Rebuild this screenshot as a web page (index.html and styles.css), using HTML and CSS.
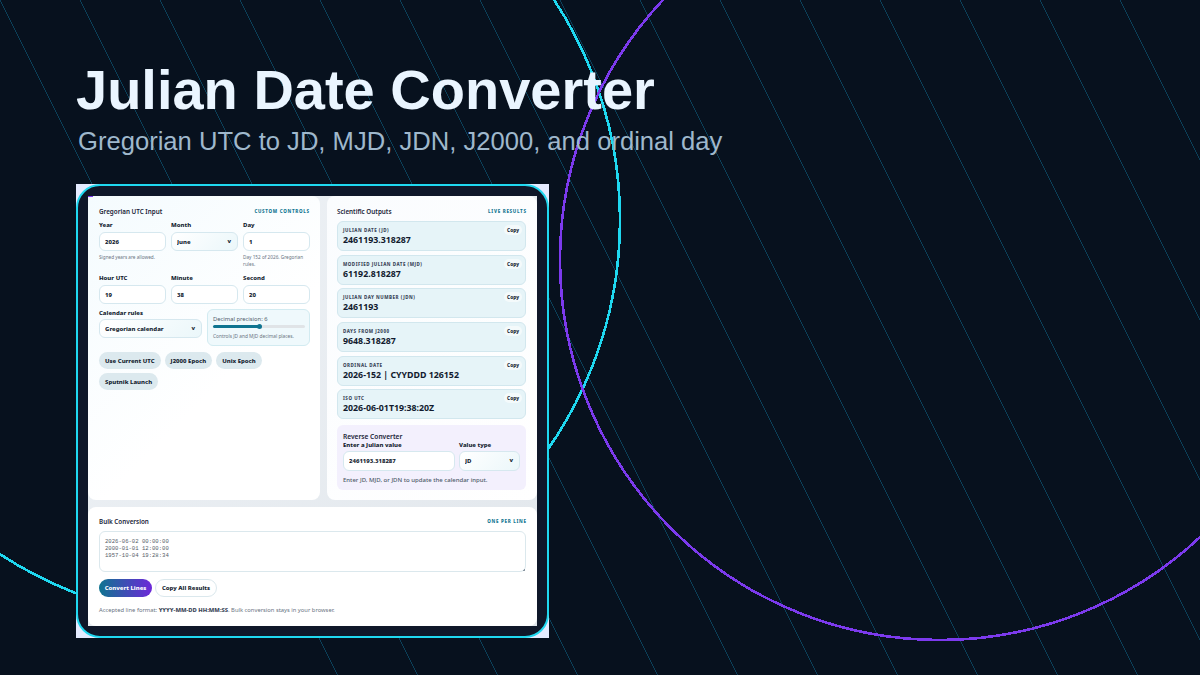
FILE: index.html
```html
<!doctype html>
<html lang="en">
  <head>
    <meta charset="UTF-8" />
    <meta name="viewport" content="width=device-width, initial-scale=1.0" />
    <title>Julian Date Converter</title>
    <link rel="stylesheet" href="styles.css">
  </head>
  <body>
    <svg class="backdrop" width="1200" height="675" viewBox="0 0 1200 675" shape-rendering="crispEdges">
      <path
        d="M0 0l337.5 675M80 0l337.5 675M160 0l337.5 675M240 0l337.5 675M320 0l337.5 675M400 0l337.5 675M480 0l337.5 675M560 0l337.5 675M640 0l337.5 675M720 0l337.5 675M800 0l337.5 675M880 0l337.5 675M960 0l337.5 675M1040 0l337.5 675M1120 0l337.5 675"
        fill="none"
        stroke="#0b3f58"
        stroke-width="1"
      />
      <circle cx="220" cy="220" r="400" fill="none" stroke="#1fd8f0" stroke-width="2.6" />
      <circle cx="940" cy="260" r="380" fill="none" stroke="#7c3aed" stroke-width="2.6" />
    </svg>

    <h1 class="headline">Julian Date Converter</h1>
    <p class="subhead">Gregorian UTC to JD, MJD, JDN, J2000, and ordinal day</p>

    <div class="frame">
      <div class="frame-inner">
        <div class="shot">
          <div class="top-row">
            <section class="card input-card">
              <div class="card-head">
                <h2>Gregorian UTC Input</h2>
                <span class="tag">Custom Controls</span>
              </div>

              <div class="field-grid">
                <div class="field">
                  <label>Year</label>
                  <input value="2026" />
                  <p class="hint">Signed years are allowed.</p>
                </div>
                <div class="field">
                  <label>Month</label>
                  <div class="select-wrap">
                    <select><option>June</option></select>
                  </div>
                </div>
                <div class="field">
                  <label>Day</label>
                  <input value="1" />
                  <p class="hint">Day 152 of 2026. Gregorian rules.</p>
                </div>
                <div class="field">
                  <label>Hour UTC</label>
                  <input value="19" />
                </div>
                <div class="field">
                  <label>Minute</label>
                  <input value="38" />
                </div>
                <div class="field">
                  <label>Second</label>
                  <input value="20" />
                </div>
              </div>

              <div class="rules-row">
                <div class="field">
                  <label>Calendar rules</label>
                  <div class="select-wrap">
                    <select><option>Gregorian calendar</option></select>
                  </div>
                </div>
                <div class="precision">
                  <span class="precision-label">Decimal precision: 6</span>
                  <input class="slider" type="range" min="0" max="12" value="6" />
                  <span class="precision-note">Controls JD and MJD decimal places.</span>
                </div>
              </div>

              <div class="chips">
                <button class="chip">Use Current UTC</button>
                <button class="chip">J2000 Epoch</button>
                <button class="chip">Unix Epoch</button>
                <button class="chip">Sputnik Launch</button>
              </div>
            </section>

            <section class="card output-card">
              <div class="card-head">
                <h2>Scientific Outputs</h2>
                <span class="tag">Live Results</span>
              </div>

              <div class="output">
                <span class="output-label">Julian Date (JD)</span>
                <strong class="output-value">2461193.318287</strong>
                <button class="copy">Copy</button>
              </div>
              <div class="output">
                <span class="output-label">Modified Julian Date (MJD)</span>
                <strong class="output-value">61192.818287</strong>
                <button class="copy">Copy</button>
              </div>
              <div class="output">
                <span class="output-label">Julian Day Number (JDN)</span>
                <strong class="output-value">2461193</strong>
                <button class="copy">Copy</button>
              </div>
              <div class="output">
                <span class="output-label">Days from J2000</span>
                <strong class="output-value">9648.318287</strong>
                <button class="copy">Copy</button>
              </div>
              <div class="output">
                <span class="output-label">Ordinal Date</span>
                <strong class="output-value">2026-152 | CYYDDD 126152</strong>
                <button class="copy">Copy</button>
              </div>
              <div class="output">
                <span class="output-label">ISO UTC</span>
                <strong class="output-value">2026-06-01T19:38:20Z</strong>
                <button class="copy">Copy</button>
              </div>

              <div class="reverse">
                <h3>Reverse Converter</h3>
                <div class="reverse-row">
                  <div class="field">
                    <label>Enter a Julian value</label>
                    <input value="2461193.318287" />
                  </div>
                  <div class="field">
                    <label>Value type</label>
                    <div class="select-wrap">
                      <select><option>JD</option></select>
                    </div>
                  </div>
                </div>
                <p class="reverse-note">Enter JD, MJD, or JDN to update the calendar input.</p>
              </div>
            </section>
          </div>

          <section class="card bulk-card">
            <div class="card-head">
              <h2>Bulk Conversion</h2>
              <span class="tag">One per line</span>
            </div>
            <div class="bulk-box">
              <textarea class="bulk-text" spellcheck="false">2026-06-02 00:00:00
2000-01-01 12:00:00
1957-10-04 19:28:34</textarea>
            </div>
            <div class="bulk-actions">
              <button class="btn-primary">Convert Lines</button>
              <button class="btn-ghost">Copy All Results</button>
            </div>
            <p class="bulk-note">Accepted line format: <strong>YYYY-MM-DD HH:MM:SS</strong>. Bulk conversion stays in your browser.</p>
          </section>
        </div>
      </div>
    </div>
  </body>
</html>
```

FILE: styles.css
```css
* {
  box-sizing: border-box;
}

html,
body {
  height: 100%;
}

body {
  margin: 0;
  padding: 59px 0 0 76px;
  overflow: hidden;
  background: #07111e;
  font-family: "Noto Sans", "Open Sans", sans-serif;
  color: #111a2e;
}

.backdrop {
  position: absolute;
  left: 0;
  top: 0;
}

.headline {
  position: relative;
  margin: 0;
  font-family: "Liberation Sans", Arial, sans-serif;
  font-size: 56px;
  line-height: 62px;
  font-weight: 700;
  color: #eaf5ff;
}

.subhead {
  position: relative;
  margin: 2px 0 0 2px;
  font-family: "Liberation Sans", Arial, sans-serif;
  font-size: 25.6px;
  line-height: 36px;
  color: #9fb8cc;
}

.frame {
  position: relative;
  width: 473px;
  height: 454px;
  margin-top: 25px;
  background: #e4ebff;
}

.frame-inner {
  height: 100%;
  padding: 10px;
  background: #0f1729;
  border: 2px solid #1fd8f0;
  border-radius: 24px;
}

.shot {
  position: relative;
  display: flex;
  flex-direction: column;
  gap: 7px;
  height: 100%;
  background: linear-gradient(135deg, #eef2f6, #e2e7ec);
}

.shot::before {
  content: "";
  position: absolute;
  left: 0;
  top: 0;
  width: 5px;
  height: 1px;
  background: #7c3aed;
}

.top-row {
  display: flex;
  gap: 7px;
  height: 304px;
}

.card {
  background: #fff;
  border-radius: 8px;
  padding: 11px;
}

.input-card {
  width: 232px;
  background: linear-gradient(135deg, #f4fbfe, #ffffff 60%);
}

.output-card {
  width: 210px;
  padding: 11px 11px 11px 10px;
  background: linear-gradient(135deg, #fafcfe, #ffffff);
}

.bulk-card {
  flex: 1;
}

.card-head {
  display: flex;
  justify-content: space-between;
  align-items: center;
  height: 10px;
  margin-top: -1px;
}

.card-head h2 {
  margin: 0;
  font-size: 6.3px;
  font-weight: 600;
  color: #1a2438;
}

.bulk-card .card-head {
  margin-top: -2px;
}

.tag {
  margin-right: -0.7px;
  font-size: 4.5px;
  font-weight: 800;
  letter-spacing: 0.7px;
  text-transform: uppercase;
  color: #0f7490;
}

.field-grid {
  display: grid;
  grid-template-columns: repeat(3, 67px);
  column-gap: 5px;
  margin-top: 5px;
}

.field label {
  display: block;
  height: 11px;
  font-size: 6px;
  line-height: 9px;
  font-weight: 800;
  color: #141d30;
}

.field input,
.field select {
  display: block;
  width: 100%;
  height: 19px;
  padding: 0 5px;
  border: 1px solid #d6e8ef;
  border-radius: 6px;
  outline: none;
  font-family: inherit;
  font-size: 6px;
  font-weight: 800;
  color: #141d30;
  background: #fff;
}

.field select {
  appearance: none;
  background: linear-gradient(135deg, #ffffff, #ebf7fa);
}

.select-wrap {
  position: relative;
}

.select-wrap::after {
  content: "v";
  position: absolute;
  right: 7px;
  top: 5px;
  font-size: 6px;
  line-height: 9px;
  font-weight: 800;
  color: #141d30;
}

.hint {
  margin: 3px 0 0;
  min-height: 14px;
  font-size: 4.7px;
  line-height: 7.4px;
  color: #69737f;
}

.field-grid .field:nth-child(n + 4) .hint {
  display: none;
}

.field-grid .field:nth-child(-n + 3) {
  height: 53px;
}

.rules-row {
  display: grid;
  grid-template-columns: 103px 103px;
  column-gap: 5px;
  margin-top: 5px;
}

.rules-row label {
  height: 10px;
}

.precision {
  display: flex;
  flex-direction: column;
  height: 37px;
  padding: 5px 5px 0;
  background: #eff9fc;
  border: 1px solid #d2ebf1;
  border-radius: 6px;
}

.precision-label {
  font-size: 5.8px;
  line-height: 8px;
  color: #4f5b6a;
}

.slider {
  appearance: none;
  display: block;
  width: 92px;
  height: 6px;
  margin: 0 0 3px;
  background: transparent;
}

.slider::-webkit-slider-runnable-track {
  height: 3px;
  border-radius: 2px;
  background: linear-gradient(90deg, #0f7490 50%, #e0e4e7 50%);
}

.slider::-webkit-slider-thumb {
  appearance: none;
  width: 5px;
  height: 5px;
  margin-top: -1px;
  border-radius: 50%;
  background: #0f7490;
}

.precision-note {
  font-size: 4.8px;
  line-height: 8px;
  color: #69737f;
}

.chips {
  display: flex;
  flex-wrap: wrap;
  gap: 4px;
  margin-top: 6px;
}

.chip {
  height: 17px;
  padding: 0 6px;
  border: none;
  border-radius: 9px;
  background: #dce9ee;
  font-family: inherit;
  font-size: 6px;
  font-weight: 800;
  color: #141d30;
}

.output {
  position: relative;
  display: flex;
  flex-direction: column;
  height: 30px;
  margin-top: 3.7px;
  padding: 5px 5px 0;
  background: #e6f4f8;
  border: 1px solid #d2e7ee;
  border-radius: 6px;
}

.card-head + .output {
  margin-top: 5px;
}

.output-label {
  font-size: 4.5px;
  line-height: 7px;
  font-weight: 800;
  letter-spacing: 0.5px;
  text-transform: uppercase;
  color: #3b4658;
}

.output-value {
  font-size: 8.8px;
  line-height: 13px;
  font-weight: 700;
  color: #111a2e;
}

.copy {
  position: absolute;
  right: 3px;
  top: 3px;
  height: 10px;
  padding: 0 3px;
  border: none;
  border-radius: 5px;
  background: #f4fafb;
  font-family: inherit;
  font-size: 4.8px;
  font-weight: 800;
  color: #141d30;
}

.reverse {
  height: 65px;
  margin-top: 5.5px;
  padding: 7px 6px 0;
  background: #f3f0fd;
  border-radius: 6px;
}

.reverse h3 {
  margin: 0;
  font-size: 6.6px;
  line-height: 9px;
  font-weight: 600;
  color: #1a2438;
}

.reverse-row {
  display: grid;
  grid-template-columns: 112px 61px;
  column-gap: 4px;
}

.reverse-row label {
  height: 10px;
}

.reverse-row input,
.reverse-row select {
  height: 20px;
}

.reverse-note {
  margin: 5px 0 0;
  font-size: 6px;
  line-height: 8px;
  font-weight: 500;
  color: #4f5b6a;
}

.bulk-box {
  position: relative;
  height: 41px;
  margin-top: 5px;
}

.bulk-box::after {
  content: "";
  position: absolute;
  right: 1px;
  bottom: 1px;
  width: 3px;
  height: 3px;
  background: linear-gradient(135deg, transparent 50%, #8b97a3 50%);
}

.bulk-text {
  display: block;
  width: 100%;
  height: 100%;
  padding: 6px 5px;
  border: 1px solid #dbe8ed;
  border-radius: 6px;
  outline: none;
  resize: none;
  overflow: hidden;
  font-family: "Liberation Mono", "DejaVu Sans Mono", monospace;
  font-size: 5.6px;
  line-height: 7.2px;
  color: #555d68;
  background: #fff;
}

.bulk-actions {
  display: flex;
  gap: 3px;
  margin-top: 7px;
}

.btn-primary,
.btn-ghost {
  height: 18px;
  border-radius: 9px;
  font-family: inherit;
  font-size: 6px;
  font-weight: 800;
}

.btn-primary {
  width: 53px;
  padding: 0;
  border: none;
  color: #fff;
  background: linear-gradient(90deg, #0f7490, #6d28d9);
}

.btn-ghost {
  width: 62px;
  padding: 0;
  border: 1px solid #dbe8ed;
  color: #141d30;
  background: #fff;
}

.bulk-note {
  margin: 9px 0 0;
  font-size: 5.8px;
  line-height: 8px;
  color: #69737f;
}

.bulk-note strong {
  font-weight: 800;
  color: #3b4658;
}
```
